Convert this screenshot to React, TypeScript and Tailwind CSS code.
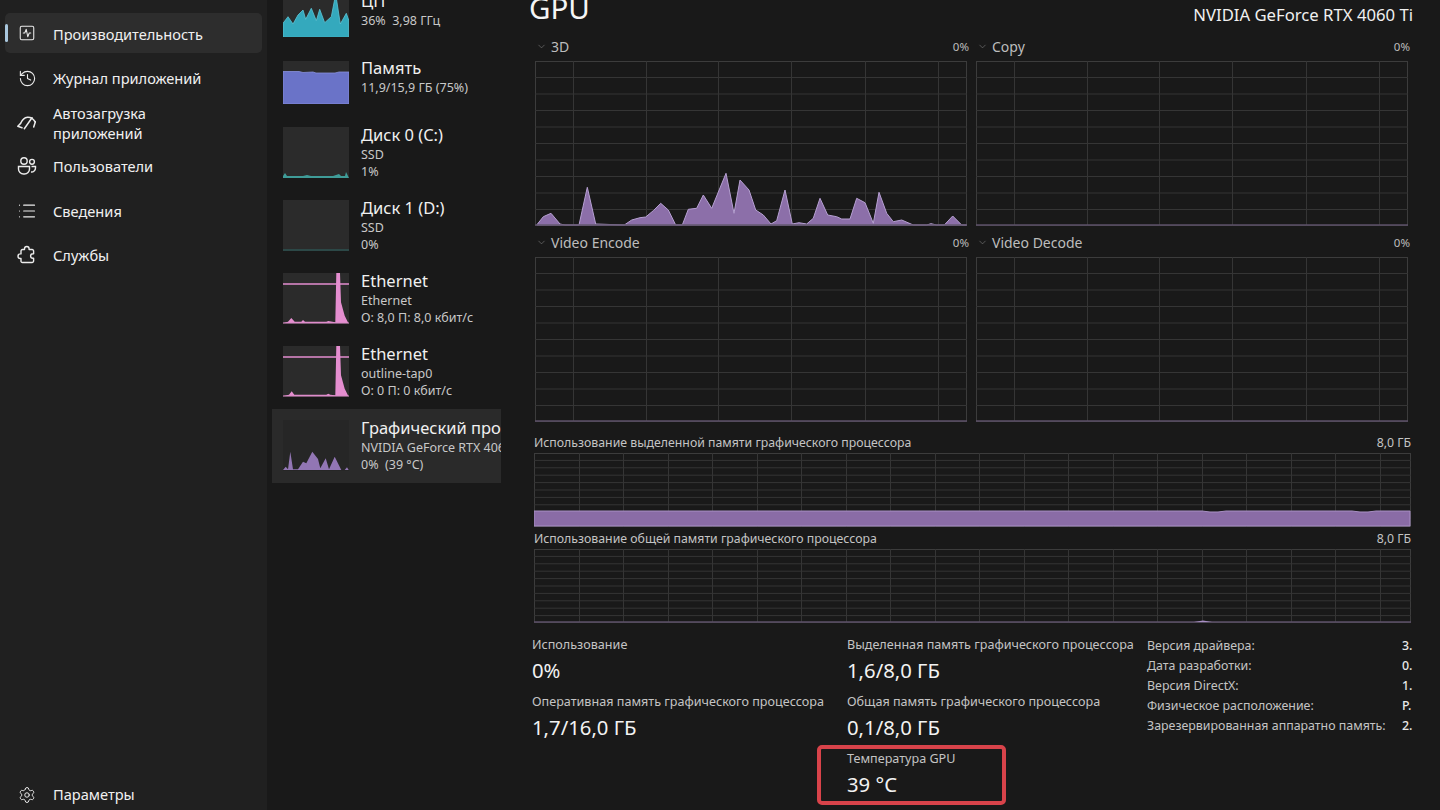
import { ChevronDown, History, List, Settings, SquareActivity } from "lucide-react";
import type { ReactNode } from "react";

const GaugeIcon = () => (
  <svg width="20" height="20" viewBox="0 0 20 20" fill="none" stroke="currentColor" strokeWidth="1.5" strokeLinecap="round" strokeLinejoin="round" className="-mt-[3px]">
    <path d="M3.500 11.500.8 14.300 5 15.700" />
    <path d="M3.500 11.500C5 8 7.500 5.500 10.500 5.200c2.800-.2 6 1.800 7.800 4.800" />
    <path d="M15 5.700 7.300 16.700" />
    <path d="M18.300 10 16.700 15" />
  </svg>
);

const UsersIcon = () => (
  <svg width="20" height="20" viewBox="0 0 20 20" fill="none" stroke="currentColor" strokeWidth="1.4">
    <circle cx="7" cy="5" r="3.2" />
    <circle cx="15" cy="5.8" r="2.4" />
    <path d="M1.500 10.500h11v2.500a5 5 0 0 1-5 5h-1a5 5 0 0 1-5-5z" />
    <path d="M14.500 10.500H18.500v1.500a4 4 0 0 1-4.500 4" />
  </svg>
);

const ServicesIcon = () => (
  <svg width="20" height="20" viewBox="0 0 20 20" fill="none" stroke="currentColor" strokeWidth="1.4" strokeLinejoin="round">
    <path d="M7.500 4.500V3.800a2.300 2.300 0 0 1 4.600 0v.7h3a1.500 1.500 0 0 1 1.500 1.500v2.700h-.7a2.300 2.300 0 0 0 0 4.600h.7v2.700a1.500 1.500 0 0 1-1.500 1.500H5.500A1.500 1.500 0 0 1 4 16.500v-3h-.7a2.300 2.300 0 0 1 0-4.600H4V6a1.500 1.500 0 0 1 1.500-1.500z" />
  </svg>
);

const navItems = [
  { label: "Производительность", icon: <SquareActivity size={18} strokeWidth={1.4} />, cls: "h-10 bg-[#2d2d2d]", active: true },
  { label: "Журнал приложений", icon: <History size={19} strokeWidth={1.4} />, cls: "h-10 mt-[5px]" },
  { label: "Автозагрузка приложений", icon: <GaugeIcon />, cls: "h-10 mt-[5px]" },
  { label: "Пользователи", icon: <UsersIcon />, cls: "h-10 mt-[3px]" },
  { label: "Сведения", icon: <List size={20} strokeWidth={1.4} />, cls: "h-10 mt-[5px]" },
  { label: "Службы", icon: <ServicesIcon />, cls: "h-10 mt-[4px]" },
];

// thumbnails are traced from the 3x crops, so x/y come in as crop coordinates
const toPoints = (pts: number[][], ox: number, oy: number, s = 3) =>
  pts.map(([x, y]) => `${((x - ox) / s).toFixed(1)},${((y - oy) / s).toFixed(1)}`).join(" ");

const cpuTrace = [[40, 112], [40, 70], [55, 50], [70, 72], [85, 45], [100, 30], [108, 58], [125, 25], [140, 62], [150, 28], [165, 68], [185, 50], [198, -18], [212, 72], [230, 40], [237, 60], [237, 112]];
const gpuTrace = [[40, 630], [48, 620], [55, 628], [62, 575], [70, 628], [85, 628], [100, 605], [110, 610], [128, 575], [145, 597], [152, 625], [168, 595], [178, 628], [195, 590], [215, 630], [225, 630], [232, 622], [237, 630]];
const netTrace = (bump: number[][]) => [[40, 192], ...bump, [197, 190], [200, 42], [211, 42], [214, 130], [225, 170], [236, 192]];
const net1 = netTrace([[55, 188], [65, 177], [75, 188], [95, 188], [100, 183], [106, 188], [170, 188], [176, 186]]);
const net2 = netTrace([[58, 188], [66, 178], [74, 188], [170, 188], [176, 185], [182, 188]]);

const CpuThumb = () => (
  <svg width="66" height="43" viewBox="0 0 66 43" className="bg-[#2b2b2b]">
    <polygon points={toPoints(cpuTrace, 40, -18)} fill="#34a9bd" stroke="#5cc6d8" strokeWidth="0.8" />
  </svg>
);

const MemThumb = () => (
  <svg width="66" height="43" viewBox="0 0 66 43" className="bg-[#2b2b2b]">
    <polygon points="0,43 0,10.5 16,10.5 20,11.5 30,11 33,12 52,12 56,11 66,11 66,43" fill="#6a73c8" stroke="#8890dc" strokeWidth="0.8" />
  </svg>
);

const DiskThumb = ({ busy }: { busy?: boolean }) => (
  <svg width="66" height="51" viewBox="0 0 66 51" className="bg-[#2b2b2b]">
    {busy ? (
      <polygon points="0,51 0,49 2,46 4,49 20,49 24,48 28,49 50,49 56,47 58,49 62,49 63,45 65,49 66,51" fill="#3f9c98" />
    ) : (
      <line x1="0" y1="50" x2="66" y2="50" stroke="#2e6664" />
    )}
  </svg>
);

const NetThumb = ({ trace }: { trace: number[][] }) => (
  <svg width="66" height="51" viewBox="0 0 66 51" className="bg-[#2b2b2b]">
    <polygon points={toPoints(trace, 40, 42)} fill="#e58ed0" />
    <line x1="0" y1="50" x2="66" y2="50" stroke="#d98bc6" />
    <line x1="0" y1="11" x2="66" y2="11" stroke="#e58ed0" strokeWidth="1.5" />
  </svg>
);

const GpuThumb = () => (
  <svg width="66" height="51" viewBox="0 0 66 51" className="bg-[#262626]">
    <polygon points={toPoints(gpuTrace, 40, 480)} fill="#9276b4" />
  </svg>
);

const tiles: { title: string; lines: string[]; thumb: ReactNode; cls: string; textCls: string }[] = [
  { title: "ЦП", lines: ["36%  3,98 ГГц"], thumb: <CpuThumb />, cls: "h-[67px] -mt-[17px]", textCls: "-mt-[4px]" },
  { title: "Память", lines: ["11,9/15,9 ГБ (75%)"], thumb: <MemThumb />, cls: "h-[66px]", textCls: "-mt-[4px]" },
  { title: "Диск 0 (C:)", lines: ["SSD", "1%"], thumb: <DiskThumb busy />, cls: "h-[73px]", textCls: "-mt-[3px]" },
  { title: "Диск 1 (D:)", lines: ["SSD", "0%"], thumb: <DiskThumb />, cls: "h-[73px]", textCls: "-mt-[3px]" },
  { title: "Ethernet", lines: ["Ethernet", "О: 8,0 П: 8,0 кбит/с"], thumb: <NetThumb trace={net1} />, cls: "h-[73px]", textCls: "-mt-[3px]" },
  { title: "Ethernet", lines: ["outline-tap0", "О: 0 П: 0 кбит/с"], thumb: <NetThumb trace={net2} />, cls: "h-[73px]", textCls: "-mt-[3px]" },
  { title: "Графический процессор 0", lines: ["NVIDIA GeForce RTX 4060 Ti", "0%  (39 °C)"], thumb: <GpuThumb />, cls: "h-[74px] mt-[1px] bg-[#2a2a2a]", textCls: "-mt-[3px]" },
];

const gridLines = (w: number, h: number, xs: number[]) => {
  const ys = Array.from({ length: 9 }, (_, i) => ((i + 1) * h) / 10);
  return (
    <g stroke="#353535" strokeWidth="1">
      <rect x="0.5" y="0.5" width={w - 1} height={h - 1} fill="none" stroke="#3c3c3c" />
      {xs.map((x) => (
        <line key={x} x1={x} y1="0" x2={x} y2={h} />
      ))}
      {ys.map((y) => (
        <line key={y} x1="0" y1={y} x2={w} y2={y} />
      ))}
    </g>
  );
};

const bigXs = [38.5, 111.5, 183.5, 256.5, 330.5, 403.5];
const memXs = Array.from({ length: 19 }, (_, i) => Math.round(44.5 * (i + 1)) + 0.5);

// zoomed trace of the 3D graph
const trace3d = [[35, 675], [55, 650], [78, 640], [105, 672], [120, 675], [162, 675], [187, 562], [212, 672], [298, 675], [320, 660], [345, 653], [362, 651], [385, 632], [407, 610], [430, 630], [452, 675], [472, 675], [490, 628], [515, 625], [535, 585], [560, 625], [603, 520], [627, 640], [645, 540], [672, 570], [692, 630], [715, 645], [738, 672], [755, 662], [780, 570], [802, 672], [822, 668], [845, 672], [865, 655], [885, 595], [908, 645], [935, 650], [950, 657], [975, 657], [995, 595], [1020, 608], [1045, 670], [1062, 577], [1085, 640], [1105, 665], [1130, 660], [1165, 675], [1205, 675], [1218, 671], [1235, 675], [1258, 675], [1283, 648], [1310, 675], [1325, 675]];

const EngineGraph = ({ label, data }: { label: string; data?: number[][] }) => (
  <div>
    <div className="flex h-[21px] items-center justify-between pb-[8px] text-[#bdbdbd]">
      <div className="flex items-center gap-[4px] text-[14px]">
        <ChevronDown size={11} strokeWidth={1.2} className="ml-[1px] text-[#8a8a8a]" />
        <span>{label}</span>
      </div>
      <span className="-mr-[2px] text-[11.5px]">0%</span>
    </div>
    <svg width="432" height="165" viewBox="0 0 432 165" className="block">
      {gridLines(432, 165, bigXs)}
      {data && <polygon points={toPoints(data, 30, 183)} fill="#8c6fa9" stroke="#b6a0d2" strokeWidth="1" />}
      <line x1="0" y1="164" x2="432" y2="164" stroke="#5d5169" strokeWidth="1.5" />
    </svg>
  </div>
);

const MemGraph = ({ label, filled }: { label: string; filled?: boolean }) => (
  <div className="w-[877px]">
    <div className="flex h-5 items-center justify-between text-[12.3px] text-[#c4c4c4]">
      <span>{label}</span>
      <span>8,0 ГБ</span>
    </div>
    <svg width="877" height="74" viewBox="0 0 877 74" className="block">
      {gridLines(877, 74, memXs)}
      {filled ? (
        <polygon
          points="0,73 0,58 668,58 676,59 684,59 692,58 818,58 826,59 834,59 842,58 876,58 876,73"
          fill="#8a6ca6"
          stroke="#a88fc4"
          strokeWidth="1"
        />
      ) : (
        <>
          <line x1="0" y1="73" x2="877" y2="73" stroke="#5d5169" strokeWidth="1.5" />
          <polygon points="660,73 669,71.5 678,73" fill="#a88fc4" />
        </>
      )}
    </svg>
  </div>
);

const Stat = ({ label, value }: { label: string; value: string }) => (
  <div className="mb-[5px]">
    <div className="flex h-5 items-center whitespace-nowrap text-[12.6px] text-[#c4c4c4]">{label}</div>
    <div className="flex h-8 items-center whitespace-nowrap pb-[2px] text-[20.3px] text-[#f2f2f2]">{value}</div>
  </div>
);

const specs = [
  ["Версия драйвера:", "3."],
  ["Дата разработки:", "0."],
  ["Версия DirectX:", "1."],
  ["Физическое расположение:", "P."],
  ["Зарезервированная аппаратно память:", "2."],
];

export default function App() {
  return (
    <div className="flex h-[810px] w-[1440px] overflow-hidden bg-[#191919] font-['Noto_Sans',sans-serif]">
      <aside className="flex w-[267px] shrink-0 flex-col bg-[#202020] pl-[5px] pr-[5px] pt-[13px] text-[#f0f0f0]">
        {navItems.map((item) => (
          <div key={item.label} className={`relative flex items-center rounded-[5px] ${item.cls}`}>
            {item.active && <span className="absolute left-0 top-[11px] h-[18px] w-[3px] rounded-full bg-[#a9c7de]" />}
            <span className="mr-[4px] flex w-[44px] justify-center text-[#ececec]">{item.icon}</span>
            <span className={`w-[160px] text-[14.6px] leading-[20px] ${item.active ? "pt-[1px]" : ""}`}>{item.label}</span>
          </div>
        ))}
        <div className="mt-auto flex h-[30px] items-center">
          <span className="mr-[4px] flex w-[44px] justify-center text-[#ececec]">
            <Settings size={18} strokeWidth={1.3} />
          </span>
          <span className="text-[14.6px]">Параметры</span>
        </div>
      </aside>

      <nav className="w-[234px] shrink-0 pl-[5px]">
        {tiles.map((tile, i) => (
          <div key={i} className={`flex gap-[12px] overflow-hidden pl-[11px] pt-[11px] ${tile.cls}`}>
            <div className="shrink-0">{tile.thumb}</div>
            <div className={`whitespace-nowrap ${tile.textCls}`}>
              <div className="text-[16.5px] leading-[22px] text-[#f0f0f0]">{tile.title}</div>
              {tile.lines.map((line) => (
                <div key={line} className="whitespace-pre text-[12.5px] leading-[17px] text-[#c8c8c8]">
                  {line}
                </div>
              ))}
            </div>
          </div>
        ))}
      </nav>

      <main className="w-[939px] shrink-0 pl-[33px]">
        <div className="flex h-[40px] w-[879px] justify-between">
          <h1 className="-ml-[5px] -mt-[12px] text-[29.5px] leading-[40px] text-[#f5f5f5]">GPU</h1>
          <span className="pt-[3px] text-[16.7px] leading-[24px] text-[#f0f0f0]">NVIDIA GeForce RTX 4060 Ti</span>
        </div>
        <div className="ml-[1px] grid w-[875px] grid-cols-[432px_432px] gap-x-[9px] gap-y-[10px]">
          <EngineGraph label="3D" data={trace3d} />
          <EngineGraph label="Copy" />
          <EngineGraph label="Video Encode" />
          <EngineGraph label="Video Decode" />
        </div>
        <div className="mt-[11px] flex flex-col gap-[2px]">
          <MemGraph label="Использование выделенной памяти графического процессора" filled />
          <MemGraph label="Использование общей памяти графического процессора" />
        </div>
        <div className="-ml-[2px] mt-[12px] flex">
          <div className="w-[315px]">
            <Stat label="Использование" value="0%" />
            <Stat label="Оперативная память графического процессора" value="1,7/16,0 ГБ" />
          </div>
          <div className="w-[300px]">
            <Stat label="Выделенная память графического процессора" value="1,6/8,0 ГБ" />
            <Stat label="Общая память графического процессора" value="0,1/8,0 ГБ" />
            <div className="relative">
              <Stat label="Температура GPU" value="39 °C" />
              <div className="absolute -left-[30px] -top-[4px] h-[60px] w-[189px] rounded-[5px] border-[4px] border-[#d8434a]" />
            </div>
          </div>
          <div className="mt-[1px]">
            {specs.map(([label, value]) => (
              <div key={label} className="flex h-5 items-center whitespace-nowrap text-[12.4px]">
                <span className="w-[255px] text-[#c4c4c4]">{label}</span>
                <span className="font-medium text-[#e8e8e8]">{value}</span>
              </div>
            ))}
          </div>
        </div>
      </main>
    </div>
  );
}
